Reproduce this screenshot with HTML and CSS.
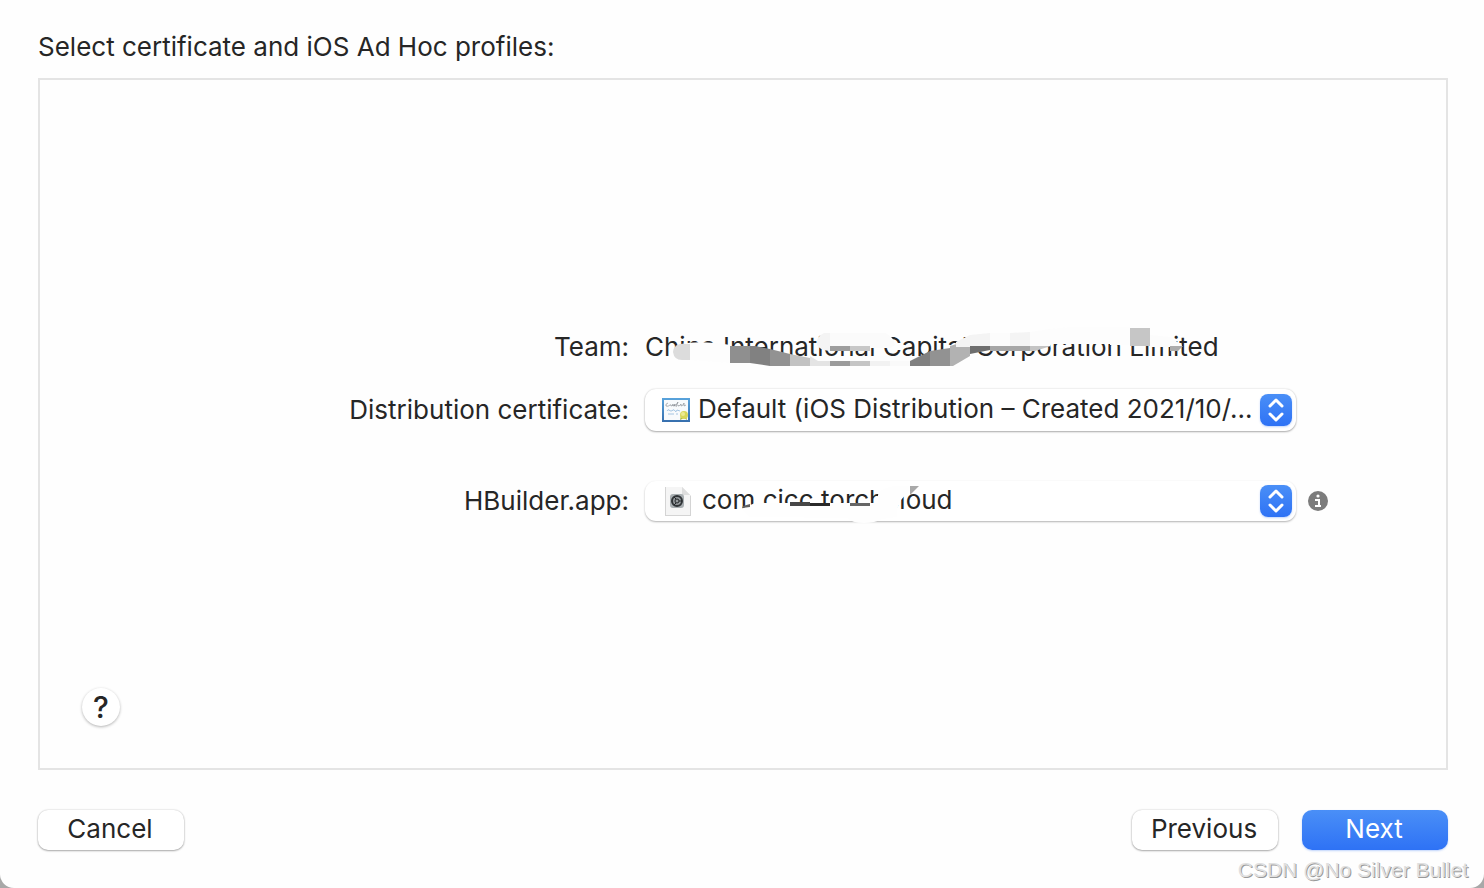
FILE: index.html
```html
<!DOCTYPE html>
<html lang="en">
<head>
  <meta charset="UTF-8">
  <meta name="viewport" content="width=device-width, initial-scale=1.0">
  <title>Select certificate and iOS Ad Hoc profiles</title>
  <link rel="stylesheet" href="styles.css">
</head>
<body>

  <div class="sheet">
    <h1>Select certificate and iOS Ad Hoc profiles:</h1>

    <main class="panel">
      <form class="profiles" id="profiles">
        <span class="label">Team:</span>
        <div class="team">
          China International Capital Corporation Limited
          <!-- Brush strokes over the team name -->
          <svg class="strokes team-strokes" width="580" height="60" viewBox="0 0 580 60" aria-hidden="true">
            <path fill="#fdfdfd" d="M50 24L90 25V43L50 40Z"/>
            <path fill="#fdfdfd" d="M41 24Q60 20 90 25V30H41Z"/>
            <path fill="#dcdcdc" d="M50 24H40Q33 26 33 32Q34 40 42 40H50Z"/>
            <path fill="#8f8f8f" d="M90 26H110V43H90Z"/>
            <path fill="#818181" d="M110 26H115L130 29V46L110 43Z"/>
            <path fill="#929292" d="M130 29L150 34V46H130Z"/>
            <path fill="#c2c2c2" d="M150 34L170 38V46H150Z"/>
            <path fill="#e4e4e4" d="M170 36L178 40H190V46H170Z"/>
            <path fill="#fdfdfd" d="M170 36H280V41H178Z"/>
            <path fill="#9b9b9b" d="M190 41H210V46H190Z"/>
            <path fill="#c5c5c5" d="M210 41H230V46H210Z"/>
            <path fill="#f2f2f2" d="M230 41H250V46H230Z"/>
            <path fill="#fafafa" d="M250 41H270V46H250Z"/>
            <path fill="#f4f4f4" d="M190 13H184Q176 16 177 25Q179 30 190 31Z"/>
            <path fill="#fbfbfb" d="M190 13H245Q253 16 255 25L250 28H190Z"/>
            <path fill="#9e9e9e" d="M190 26H210V31H190Z"/>
            <path fill="#c8c8c8" d="M210 26H230V31H210Z"/>
            <path fill="#808080" d="M270 41L290 31V46H270Z"/>
            <path fill="#929292" d="M290 31L310 28V46H290Z"/>
            <path fill="#b2b2b2" d="M310 26L330 20V36L313 46H310Z"/>
            <path fill="#f4f4f4" d="M316 22L330 15L350 13V27H316Z"/>
            <path fill="#fcfcfc" d="M350 13H370V27H350Z"/>
            <path fill="#f4f4f4" d="M370 13L390 12V27H370Z"/>
            <path fill="#fcfcfc" d="M390 12L410 9V26H390Z"/>
            <path fill="#fdfdfd" d="M410 9L430 7H470V24H410Z"/>
            <path fill="#fdfdfd" d="M470 7H490V25H470Z"/>
            <path fill="#6e6e6e" d="M330 26H350V30L330 34Z"/>
            <path fill="#a6a6a6" d="M350 26H390V31H350Z"/>
            <path fill="#c4c4c4" d="M390 26H411L395 31H390Z"/>
            <path fill="#c6c6c6" d="M490 8H510V26H490Z"/>
            <path fill="#fcfcfc" d="M510 15L530 17L542 25L538 31H530V27H510Z"/>
            <path fill="#acacac" d="M530 26H543L538 31H530Z"/>
          </svg>
        </div>

        <label class="label" for="certificate">Distribution certificate:</label>
        <div class="popup">
          <svg class="popup-icon" width="28" height="24" viewBox="0 0 28 24" aria-hidden="true">
            <defs>
              <linearGradient id="frame" x1="0" y1="0" x2="0" y2="1">
                <stop offset="0" stop-color="#58a3dc"/>
                <stop offset="1" stop-color="#376fae"/>
              </linearGradient>
            </defs>
            <path fill="url(#frame)" d="M0 0H28V24H0Z"/>
            <path fill="#f8fafc" d="M2 2H26V22H2Z"/>
            <path fill="none" stroke="#7b8087" stroke-width=".6" d="M6 5Q3 6 4 8Q6 9 8 7Q9 6 9 8Q11 8 11 6L11 8Q13 8 13 6L12 8Q14 8 16 4L14 9M16 7V8Q18 8 19 6L19 8Q21 8 22 5V8L24 7"/>
            <path fill="none" stroke="#8fb8dc" stroke-width=".8" d="M5 13Q6 11 7 12T9 13T11 12T13 13T15 12L18 13M6 16H12M14 16H16"/>
            <path fill="#a1b03d" d="M19 18L18 22L22 20L25 22L24 18Z"/>
            <circle cx="22" cy="17" r="4" fill="#d9d85b"/>
            <circle cx="21" cy="16" r="2" fill="#eeeb92"/>
          </svg>
          <select id="certificate">
            <option>Default (iOS Distribution – Created 2021/10/...</option>
          </select>
          <svg class="chevrons" width="32" height="32" viewBox="0 0 32 32" aria-hidden="true">
            <path d="M10 12L16 6L22 12M10 20L16 26L22 20"/>
          </svg>
        </div>

        <label class="label app-row" for="profile">HBuilder.app:</label>
        <div class="popup popup-profile app-row">
          <svg class="popup-icon" width="32" height="32" viewBox="0 0 32 32" aria-hidden="true">
            <path fill="#d4d4d4" d="M3 2H20L29 11V31H3Z"/>
            <path fill="#f5f5f5" d="M4 2H20L28 10V30H4Z"/>
            <path fill="#dedede" d="M20 2L28 10H20Z"/>
            <rect x="8" y="9" width="14" height="14" rx="3" fill="#a9afb2"/>
            <circle cx="15" cy="16" r="5" fill="#93989b" stroke="#303437" stroke-width="2"/>
            <circle cx="15" cy="16" r="2" fill="none" stroke="#25282a"/>
            <path stroke="#25282a" d="M17 16H20M14 14L12 12M14 18L12 20"/>
          </svg>
          <select id="profile">
            <option>com.cicc.torchcloud</option>
          </select>
          <svg class="chevrons" width="32" height="32" viewBox="0 0 32 32" aria-hidden="true">
            <path d="M10 12L16 6L22 12M10 20L16 26L22 20"/>
          </svg>
          <!-- Brush strokes over the bundle id -->
          <svg class="strokes profile-strokes" width="320" height="60" viewBox="0 0 320 60" aria-hidden="true">
            <path fill="#fefefe" d="M101 34L115 28L238 28V20Q240 12 258 11H270L268 17L261 25L257 34V42L242 44Q235 48 224 48Q212 48 207 43L110 42Z"/>
            <path fill="#606060" d="M103 31L110 29V32L102 33Z"/>
            <path fill="#474747" d="M150 27H170V31H150Z"/>
            <path fill="#292929" d="M170 28H190V31H170Z"/>
            <path fill="#666" d="M210 28H230V31H210Z"/>
            <path fill="#a9a9a9" d="M270 11H279L270 20Z"/>
          </svg>
        </div>
        <button class="info app-row" type="button" aria-label="Profile information">
          <svg width="20" height="20" viewBox="0 0 20 20" aria-hidden="true">
            <circle cx="10" cy="10" r="10" fill="#7c7c7c"/>
            <circle cx="10" cy="5" r="1.6" fill="#fff"/>
            <path fill="none" stroke="#fff" stroke-width="2" d="M7 9H11V15M7 15H13"/>
          </svg>
        </button>
      </form>

      <button class="help" type="button" aria-label="Help">?</button>
    </main>

    <footer class="actions">
      <button class="btn" type="button">Cancel</button>
      <div class="actions-right">
        <button class="btn" type="button">Previous</button>
        <button class="btn primary" type="submit" form="profiles">Next</button>
      </div>
    </footer>
  </div>

  <div class="watermark">CSDN @No Silver Bullet</div>

</body>
</html>
```
FILE: styles.css
```css
* {
  box-sizing: border-box;
}

body {
  margin: 0;
  background: #a8a8a8;
  color: #262626;
  font-family: Inter, "Liberation Sans", sans-serif;
  font-size: 26px;
  line-height: 32px;
}

button,
select {
  font: inherit;
  color: inherit;
}

.sheet {
  display: flex;
  flex-direction: column;
  min-height: 100vh;
  padding: 31px 36px 38px 38px;
  background: #fefefe;
  border-radius: 0 0 14px 14px;
}

h1 {
  margin: 0 0 15px;
  font-size: 26px;
  font-weight: 400;
}

/* Framed area with the form */
.panel {
  flex: 1;
  display: flex;
  flex-direction: column;
  justify-content: space-between;
  align-items: flex-start;
  padding: 251px 0 42px;
  border: 2px solid #e4e4e4;
}

.profiles {
  display: grid;
  grid-template-columns: 593fr 651fr 138fr;
  gap: 26px 12px;
  align-items: center;
  width: 100%;
}

.label {
  grid-column: 1;
  padding-right: 4px;
  text-align: right;
}

.team {
  position: relative;
  white-space: nowrap;
}

.app-row {
  margin-top: 24px;
}

/* Pop-up menus */
.popup {
  position: relative;
  height: 42px;
}

.popup-profile {
  height: 40px;
}

.popup select {
  width: 100%;
  height: 100%;
  padding: 0 40px 2px 53px;
  border: 0;
  border-radius: 11px;
  background: #fff;
  box-shadow: 0 1px 2px rgba(0, 0, 0, 0.3), 0 0 2px rgba(0, 0, 0, 0.15);
  appearance: none;
}

.popup-profile select {
  padding-left: 57px;
  box-shadow: 0 1px 2px rgba(0, 0, 0, 0.3);
}

.popup-icon {
  position: absolute;
  left: 17px;
  top: 9px;
  pointer-events: none;
}

.popup-profile .popup-icon {
  top: 4px;
}

.chevrons {
  position: absolute;
  right: 4px;
  top: 5px;
  border-radius: 8px;
  background: linear-gradient(#4a8ff7, #2e72f5);
  box-shadow: 0 1px 2px rgba(46, 114, 245, 0.3);
  fill: none;
  stroke: #fff;
  stroke-width: 3;
  stroke-linecap: round;
  stroke-linejoin: round;
  pointer-events: none;
}

.popup-profile .chevrons {
  top: 4px;
}

.strokes {
  position: absolute;
  left: -5px;
  pointer-events: none;
}

.team-strokes {
  top: -11px;
}

.profile-strokes {
  top: -6px;
}

.info {
  display: flex;
  justify-self: start;
  padding: 0;
  border: 0;
  background: none;
}

.help {
  width: 38px;
  height: 38px;
  margin-left: 42px;
  padding: 0;
  border: 0;
  border-radius: 50%;
  background: #fff;
  box-shadow: 0 1px 3px rgba(0, 0, 0, 0.3);
  font-size: 30px;
  font-weight: 500;
}

/* Bottom buttons */
.actions {
  display: flex;
  justify-content: space-between;
  margin-top: 40px;
}

.actions-right {
  display: flex;
  gap: 24px;
}

.btn {
  width: 146px;
  height: 40px;
  padding: 0 2px 2px 0;
  border: 0;
  border-radius: 10px;
  background: #fff;
  box-shadow: 0 1px 2px rgba(0, 0, 0, 0.3), 0 0 2px rgba(0, 0, 0, 0.2);
}

.primary {
  background: linear-gradient(#4a8ff7, #2e72f5);
  box-shadow: 0 1px 2px rgba(46, 114, 245, 0.3);
  color: #fff;
}

.watermark {
  position: absolute;
  right: 16px;
  bottom: 6px;
  color: #e0e0e0;
  font-family: "Liberation Sans", Arial, sans-serif;
  font-size: 21px;
  line-height: 24px;
  text-shadow: 1px 1px 0 #999;
}
```
